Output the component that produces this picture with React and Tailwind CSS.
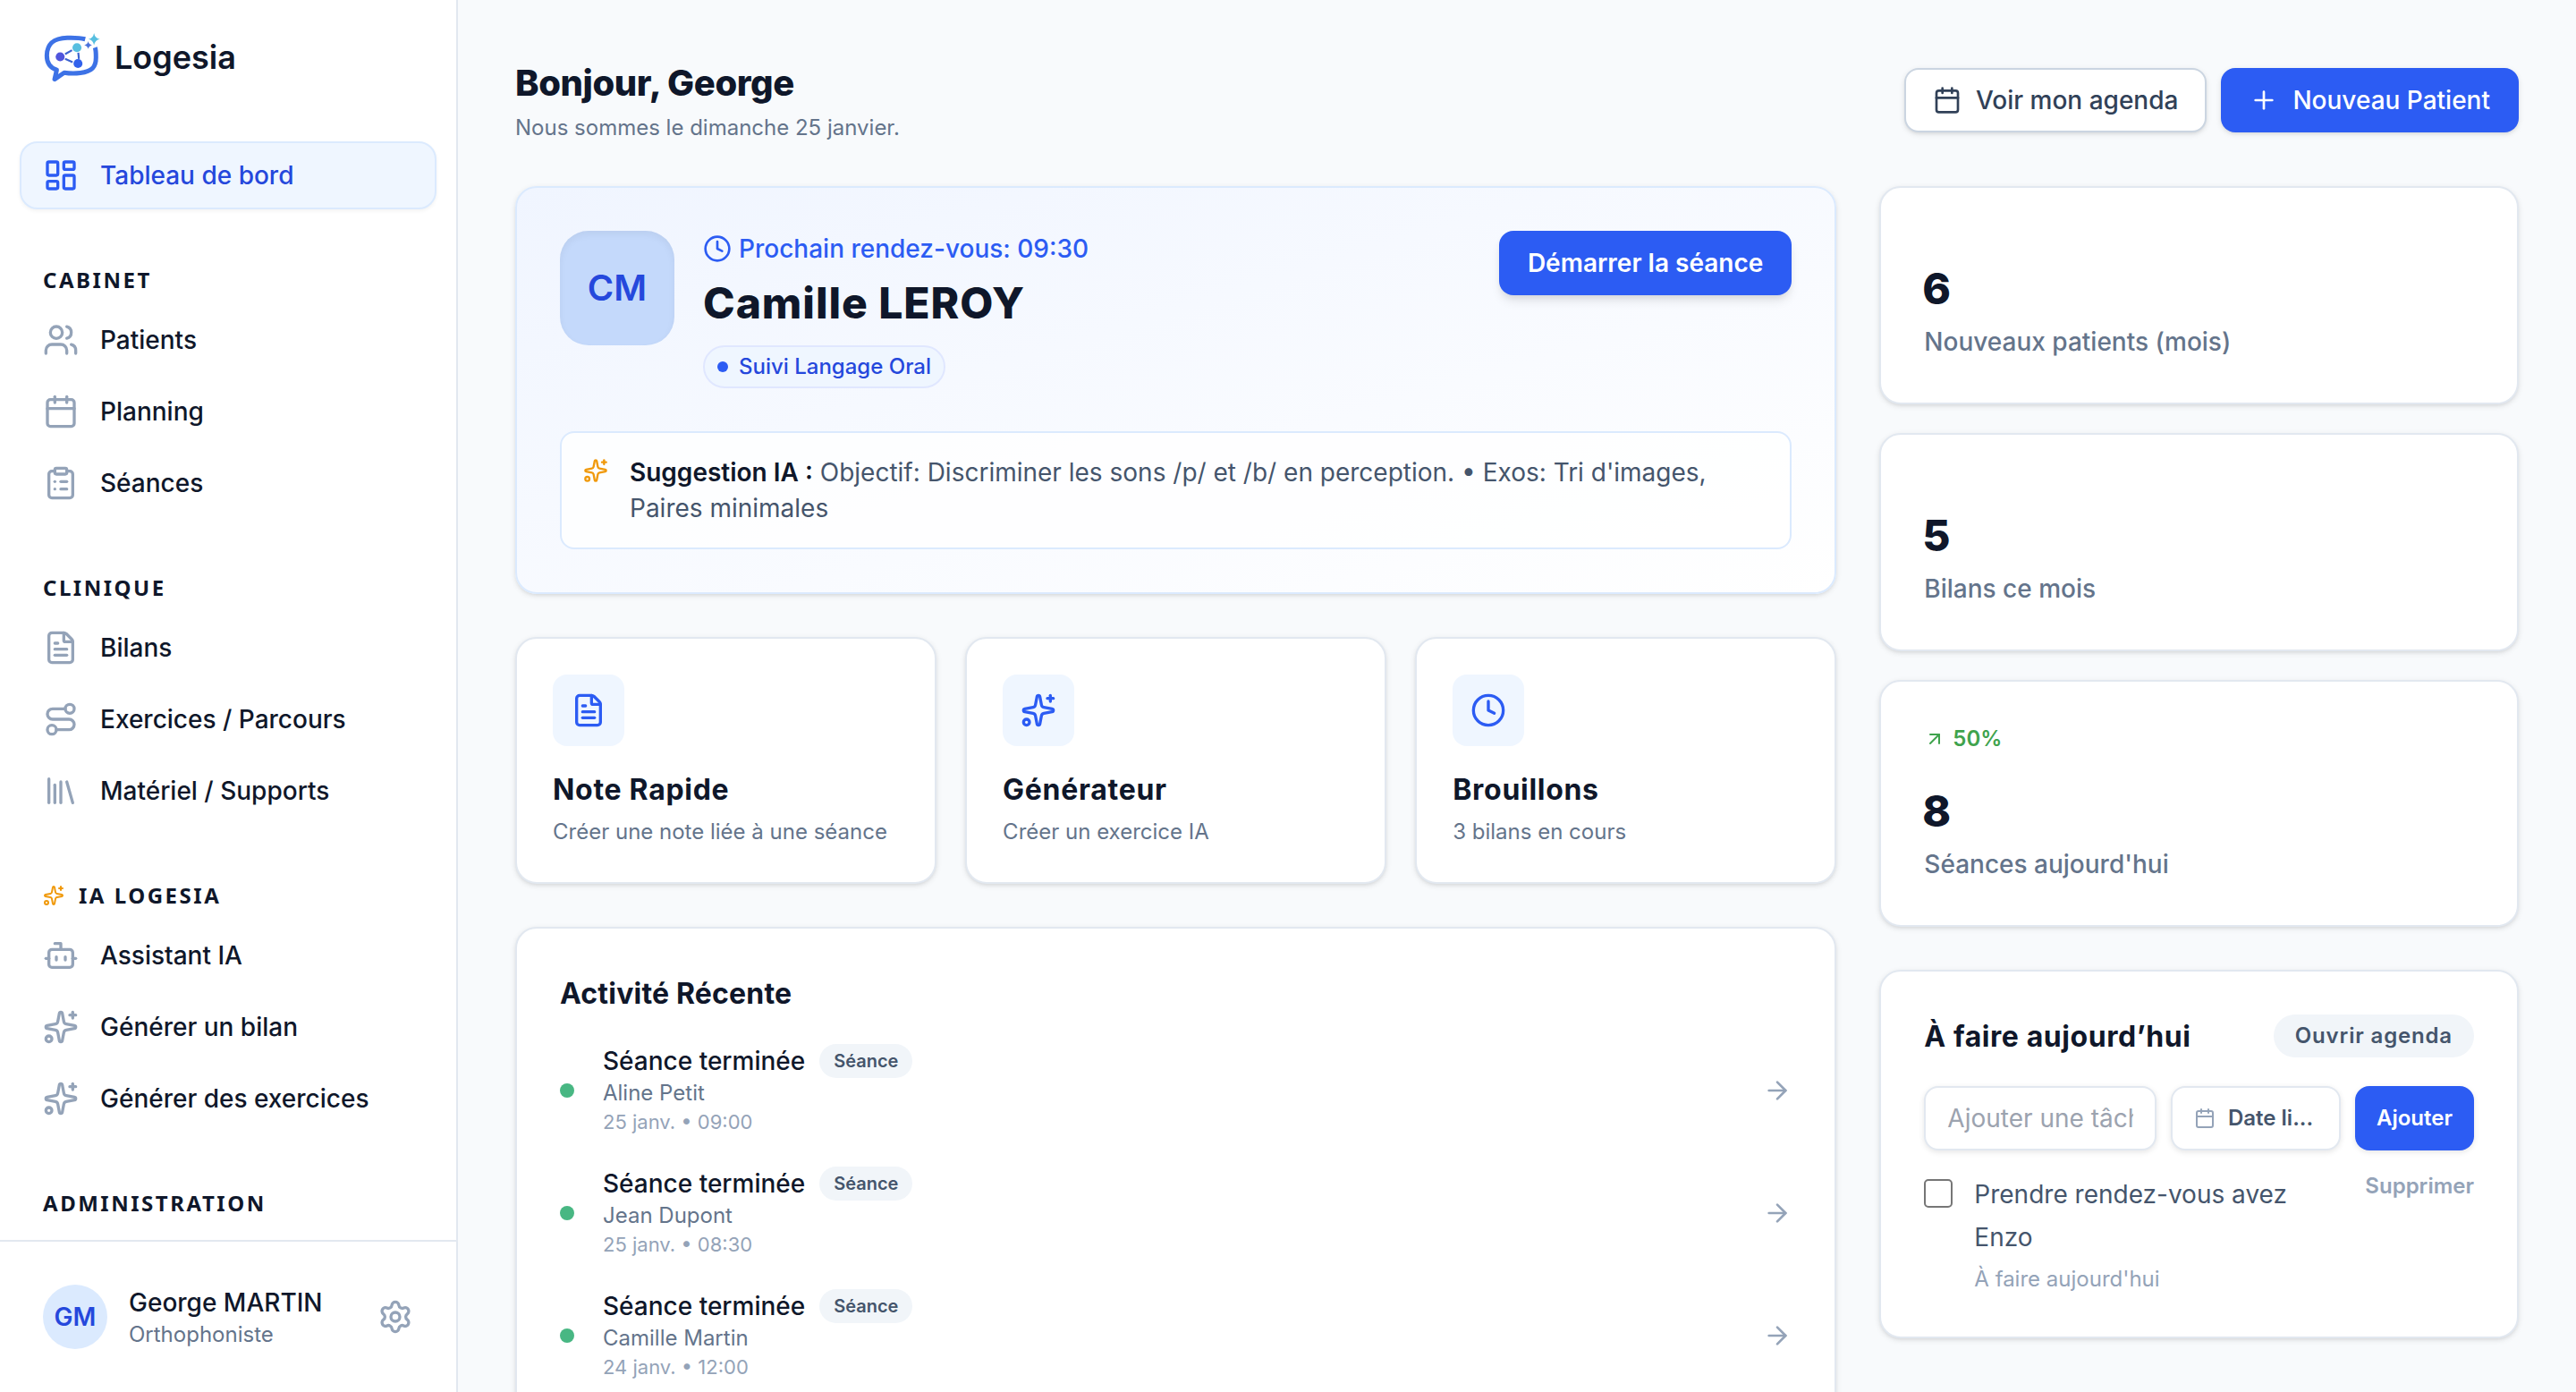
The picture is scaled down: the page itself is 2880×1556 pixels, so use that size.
import {
  ArrowRight,
  ArrowUpRight,
  Bot,
  Calendar,
  ClipboardList,
  Clock,
  FileText,
  LayoutDashboard,
  Plus,
  Route,
  Settings,
  Users,
} from 'lucide-react'
import clsx from 'clsx'

const CARD = 'rounded-3xl border-2 border-[#e2e8f0] bg-white shadow-[0_2px_6px_rgba(0,0,0,0.1),0_2px_4px_-2px_rgba(0,0,0,0.1)]'

// Four-branch sparkle with a plus top right and a ring bottom left
const SPARKLE = 'M11.017 2.814a1 1 0 0 1 1.966 0l1.051 5.558a2 2 0 0 0 1.594 1.594l5.558 1.051a1 1 0 0 1 0 1.966l-5.558 1.051a2 2 0 0 0-1.594 1.594l-1.051 5.558a1 1 0 0 1-1.966 0l-1.051-5.558a2 2 0 0 0-1.594-1.594l-5.558-1.051a1 1 0 0 1 0-1.966l5.558-1.051a2 2 0 0 0 1.594-1.594z'

function LibraryIcon({ className }) {
  return (
    <svg className={className} viewBox="0 0 24 24" fill="none" stroke="currentColor" strokeWidth="2" strokeLinecap="round" strokeLinejoin="round">
      <path d="m16 6 4 14" />
      <path d="M12 6v14" />
      <path d="M8 8v12" />
      <path d="M4 4v16" />
    </svg>
  )
}

function SparklesIcon({ className }) {
  return (
    <svg className={className} viewBox="0 0 24 24" fill="none" stroke="currentColor" strokeWidth="2" strokeLinecap="round" strokeLinejoin="round">
      <path d={SPARKLE} />
      <path d="M20 2v4" />
      <path d="M22 4h-4" />
      <circle cx="4" cy="20" r="2" />
    </svg>
  )
}

const SECTIONS = [
  {
    title: 'CABINET',
    items: [
      { label: 'Patients', icon: Users },
      { label: 'Planning', icon: Calendar },
      { label: 'Séances', icon: ClipboardList },
    ],
  },
  {
    title: 'CLINIQUE',
    items: [
      { label: 'Bilans', icon: FileText },
      { label: 'Exercices / Parcours', icon: Route },
      { label: 'Matériel / Supports', icon: LibraryIcon },
    ],
  },
  {
    title: 'IA LOGESIA',
    sparkle: true,
    items: [
      { label: 'Assistant IA', icon: Bot },
      { label: 'Générer un bilan', icon: SparklesIcon },
      { label: 'Générer des exercices', icon: SparklesIcon },
    ],
  },
  { title: 'ADMINISTRATION', items: [] },
]

const SHORTCUTS = [
  { title: 'Note Rapide', text: 'Créer une note liée à une séance', icon: FileText },
  { title: 'Générateur', text: 'Créer un exercice IA', icon: SparklesIcon },
  { title: 'Brouillons', text: '3 bilans en cours', icon: Clock },
]

const ACTIVITY = [
  { name: 'Aline Petit', date: '25 janv. • 09:00' },
  { name: 'Jean Dupont', date: '25 janv. • 08:30' },
  { name: 'Camille Martin', date: '24 janv. • 12:00' },
]

const STATS = [
  { value: '6', label: 'Nouveaux patients (mois)' },
  { value: '5', label: 'Bilans ce mois' },
  { value: '8', label: "Séances aujourd'hui", trend: '50%' },
]

function Logo() {
  return (
    <svg className="h-[57px] w-[67px] shrink-0" viewBox="20 45 200 170" fill="none">
      <path
        d="M164 71C145 66 122 66 104 66.500C60 68 37 84 36 125C35.500 150 46 166 69 174L62 205L94 183C112 186 132 186 148 184C187 179 200 164 200 132C200 118 200 108 197 99"
        stroke="#3d72e6"
        strokeWidth="15"
        strokeLinejoin="round"
      />
      <path d="M97 121L120 108M97 137L122 148M141 116L143 137" stroke="#3c63cf" strokeWidth="6.500" />
      <circle cx="80.500" cy="130" r="15" fill="#5055dc" />
      <circle cx="136.500" cy="99.500" r="15" fill="#58bfe0" />
      <circle cx="140" cy="152.500" r="15" fill="#3262ec" />
      <path d="M193.500 51Q196.500 68 213 71Q196.500 74 193.500 91Q190.500 74 175 71Q190.500 68 193.500 51Z" fill="#57bfe0" />
      <path d="M174 78Q176 89 187 91Q176 93 174 104Q172 93 161 91Q172 89 174 78Z" fill="#4a72dc" />
    </svg>
  )
}

function NavItem({ icon: Icon, label, active }) {
  return (
    <a
      className={clsx(
        'flex h-19 items-center gap-6 rounded-[20px] border-2 px-6 text-[28px] font-medium',
        active
          ? 'border-[#dbeafe] bg-[#eff6ff] text-[#2548dc] shadow-[0_2px_4px_rgba(0,0,0,0.05)]'
          : 'border-transparent text-[#0f172a]',
      )}
    >
      <Icon className={clsx('size-10 shrink-0', active ? 'text-[#2c5cf3]' : 'text-[#94a3b8]')} />
      {label}
    </a>
  )
}

function Sidebar() {
  return (
    <aside className="flex w-[512px] shrink-0 flex-col border-r-2 border-[#e2e8f0] bg-white">
      <div className="flex items-center gap-[14px] pt-[35px] pl-[47px]">
        <Logo />
        <span className="text-[36px] font-semibold text-[#0f172a]">Logesia</span>
      </div>

      <nav className="mt-auto flex h-[1228px] flex-col overflow-hidden px-[22px]">
        <NavItem icon={LayoutDashboard} label="Tableau de bord" active />
        {SECTIONS.map(section => (
          <div key={section.title} className="mt-[61px]">
            <h3 className="mb-[11px] flex h-9 items-center gap-4 px-[26px] font-['Noto_Sans',sans-serif] text-[24px] font-bold tracking-[0.105em] text-[#0f172a]">
              {section.sparkle && <SparklesIcon className="size-6 text-[#f0990b]" />}
              {section.title}
            </h3>
            <div className="flex flex-col gap-1">
              {section.items.map(item => (
                <NavItem key={item.label} {...item} />
              ))}
            </div>
          </div>
        ))}
      </nav>

      <div className="flex h-[170px] shrink-0 items-center border-t-2 border-[#e2e8f0] px-12">
        <div className="flex size-18 items-center justify-center rounded-full bg-[#dbeafe] text-[28px] font-semibold text-[#2548dc]">
          GM
        </div>
        <div className="ml-6 flex-1 pt-[3px]">
          <p className="text-[28px] leading-9 font-medium text-[#0f172a]">George MARTIN</p>
          <p className="text-2xl leading-9 text-[#64748b]">Orthophoniste</p>
        </div>
        <Settings className="size-10 text-[#94a3b8]" />
      </div>
    </aside>
  )
}

function Header() {
  return (
    <header className="mb-12 flex h-24 items-center justify-between">
      <div className="pt-0.5">
        <h1 className="text-[40px] leading-14 font-extrabold tracking-[-0.01em] text-[#0f172a]">Bonjour, George</h1>
        <p className="mt-1 text-2xl leading-9 text-[#64748b]">Nous sommes le dimanche 25 janvier.</p>
      </div>
      <div className="flex gap-4">
        <button className="flex h-18 items-center gap-4 rounded-2xl border-2 border-[#cbd5e1] bg-white px-[30px] text-[28px] font-medium text-[#314158] shadow-[0_2px_6px_rgba(0,0,0,0.1),0_2px_4px_-2px_rgba(0,0,0,0.1)]">
          <Calendar className="size-8" />
          Voir mon agenda
        </button>
        <button className="flex h-18 items-center gap-4 rounded-2xl bg-[#2c5cf3] px-8 text-[28px] font-medium text-white shadow-[0_2px_6px_rgba(0,0,0,0.1),0_2px_4px_-2px_rgba(0,0,0,0.1)]">
          <Plus className="size-8" />
          Nouveau Patient
        </button>
      </div>
    </header>
  )
}

function NextAppointment() {
  return (
    <section className="h-[456px] rounded-3xl border-2 border-[#dbeafe] bg-gradient-to-br from-[#f0f5ff] to-white p-12 shadow-[0_2px_6px_rgba(0,0,0,0.1),0_2px_4px_-2px_rgba(0,0,0,0.1)]">
      <div className="flex items-start">
        <div className="flex size-32 items-center justify-center rounded-[32px] bg-[#c4d9fb] text-[40px] font-semibold text-[#2548dc] shadow-[inset_0_4px_8px_rgba(0,0,0,0.05)]">
          CM
        </div>
        <div className="ml-8 flex flex-1 flex-col items-start">
          <p className="flex h-10 items-center gap-2 text-[28px] font-medium text-[#2c5cf3]">
            <Clock className="size-8" />
            Prochain rendez-vous: 09:30
          </p>
          <h2 className="mt-[9px] h-16 text-[48px] leading-16 font-extrabold tracking-[0.02em] text-[#0f172a]">Camille LEROY</h2>
          <span className="mt-[15px] flex h-12 items-center gap-3 rounded-full border-2 border-[#e0e7ff] bg-[#eff6ff] px-3.5 text-2xl font-medium text-[#2548dc]">
            <i className="size-3 rounded-full bg-[#2c5cf3]" />
            Suivi Langage Oral
          </span>
        </div>
        <button className="h-18 rounded-2xl bg-[#2c5cf3] px-8 text-[28px] font-semibold text-white shadow-[0_8px_12px_-2px_rgba(0,0,0,0.1),0_4px_8px_-4px_rgba(0,0,0,0.1)]">
          Démarrer la séance
        </button>
      </div>
      <div className="mt-12 flex gap-6 rounded-2xl border-2 border-[#dbeafe] bg-white/80 p-6">
        <SparklesIcon className="mt-1 size-7 shrink-0 text-[#f0990b]" />
        <p className="text-[28px] leading-10 text-[#45556c]">
          <span className="font-semibold text-[#0f172a]">Suggestion IA :</span> Objectif: Discriminer les sons /p/ et /b/ en perception. • Exos: Tri d'images, Paires minimales
        </p>
      </div>
    </section>
  )
}

function Shortcut({ icon: Icon, title, text }) {
  return (
    <div className={clsx(CARD, 'h-[276px] p-10')}>
      <div className="flex size-20 items-center justify-center rounded-2xl bg-[#eff6ff]">
        <Icon className="size-10 text-[#2c5cf3]" />
      </div>
      <h3 className="mt-[29px] text-[32px] leading-10 font-bold tracking-[0.022em] text-[#0f172a]">{title}</h3>
      <p className="mt-[11px] text-2xl leading-8 whitespace-nowrap text-[#64748b]">{text}</p>
    </div>
  )
}

function RecentActivity() {
  return (
    <section className={clsx(CARD, 'h-[720px] p-12')}>
      <h2 className="mb-[31px] text-[32px] leading-[50px] font-bold tracking-[0.006em] text-[#0f172a]">Activité Récente</h2>
      <div className="flex flex-col gap-[34px]">
        {ACTIVITY.map(({ name, date }) => (
          <div key={name} className="flex items-center gap-8">
            <i className="size-4 rounded-full bg-[#48b783]" />
            <div className="flex-1">
              <div className="flex items-center gap-4">
                <p className="text-[28px] leading-[38px] font-medium text-[#0f172a]">Séance terminée</p>
                <span className="rounded-full bg-[#f1f5f9] px-4 text-xl leading-[38px] font-semibold text-[#45556c]">Séance</span>
              </div>
              <p className="text-2xl leading-[33px] text-[#64748b]">{name}</p>
              <p className="text-[22px] leading-8 text-[#94a3b8]">{date}</p>
            </div>
            <ArrowRight className="size-8 text-[#94a3b8]" />
          </div>
        ))}
      </div>
    </section>
  )
}

function StatCard({ value, label, trend }) {
  return (
    <div className={clsx(CARD, 'p-12')}>
      {trend && (
        <p className="flex h-8 items-center gap-2 text-2xl font-semibold text-[#3fa34d]">
          <ArrowUpRight className="size-6" />
          {trend}
        </p>
      )}
      <p className="mt-[33px] -ml-0.5 text-[48px] leading-16 font-extrabold text-[#0f172a]">{value}</p>
      <p className="mt-[7px] text-[28px] leading-10 font-medium text-[#64748b]">{label}</p>
    </div>
  )
}

function TodoCard() {
  return (
    <section className={clsx(CARD, 'h-[412px] p-12')}>
      <div className="flex h-12 items-center justify-between">
        <h2 className="pt-0.5 text-[32px] font-bold tracking-[0.018em] text-[#0f172a]">À faire aujourd’hui</h2>
        <button className="h-12 rounded-full bg-[#f1f5f9] px-6 text-2xl font-semibold tracking-[0.035em] text-[#45556c]">Ouvrir agenda</button>
      </div>

      <div className="mt-8 flex h-18 gap-4">
        <input
          className="w-0 flex-1 rounded-2xl border-2 border-[#e2e8f0] bg-white px-6 text-[28px] shadow-[0_2px_6px_rgba(0,0,0,0.1)] placeholder:text-[#9ca3af]"
          placeholder="Ajouter une tâche"
        />
        <button className="flex w-[190px] items-center gap-3.5 rounded-2xl border-2 border-[#e2e8f0] bg-white px-6 text-2xl font-semibold whitespace-nowrap text-[#45556c] shadow-[0_2px_6px_rgba(0,0,0,0.1)]">
          <Calendar className="size-6 shrink-0 text-[#94a3b8]" />
          Date li...
        </button>
        <button className="w-[133px] rounded-2xl bg-[#2c5cf3] text-2xl font-semibold text-white shadow-[0_2px_6px_rgba(0,0,0,0.1)]">
          Ajouter
        </button>
      </div>

      <div className="mt-6 flex items-start">
        <span className="mt-2 size-8 shrink-0 rounded-[5px] border-2 border-[#767676] bg-white" />
        <div className="mt-px ml-6 w-[400px]">
          <p className="text-[28px] leading-12 text-[#45556c]">Prendre rendez-vous avez Enzo</p>
          <p className="mt-[7px] text-2xl leading-8 text-[#94a3b8]">À faire aujourd'hui</p>
        </div>
        <button className="ml-auto text-2xl leading-8 font-semibold text-[#94a3b8]">Supprimer</button>
      </div>
    </section>
  )
}

export default function App() {
  return (
    <div className="flex h-[1556px] w-[2880px] overflow-hidden bg-[#f8fafc] font-['Inter',sans-serif]">
      <Sidebar />
      <main className="flex-1 px-16 pt-16">
        <Header />
        <div className="grid grid-cols-3 gap-12">
          <div className="col-span-2 flex flex-col gap-12">
            <NextAppointment />
            <div className="grid grid-cols-3 gap-8">
              {SHORTCUTS.map(s => (
                <Shortcut key={s.title} {...s} />
              ))}
            </div>
            <RecentActivity />
          </div>
          <div className="flex flex-col gap-12">
            <div className="flex flex-col gap-8">
              {STATS.map(s => (
                <StatCard key={s.label} {...s} />
              ))}
            </div>
            <TodoCard />
          </div>
        </div>
      </main>
    </div>
  )
}
